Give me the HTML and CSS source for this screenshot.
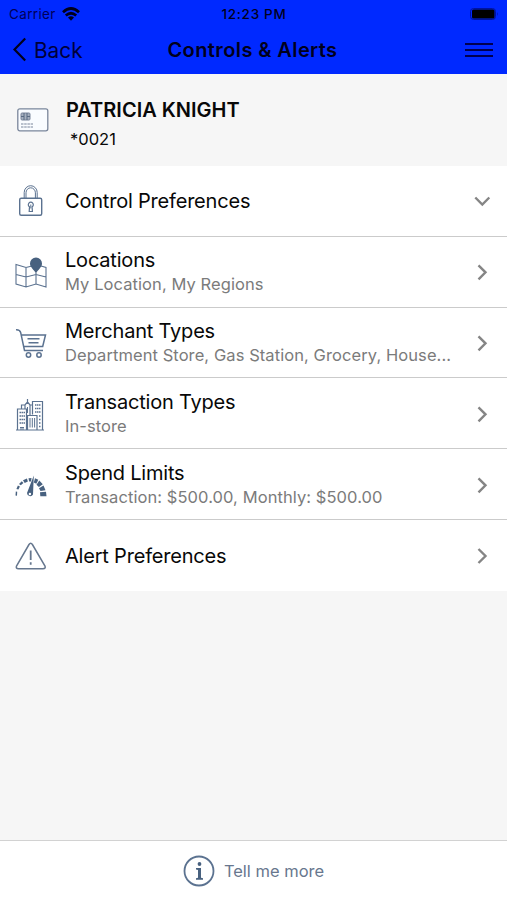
FILE: index.html
```html
<!DOCTYPE html>
<html lang="en">
<head>
<meta charset="utf-8">
<title>Controls &amp; Alerts</title>
<link rel="stylesheet" href="styles.css">
</head>
<body>
<div class="app">
  <header class="top">
    <div class="status">
      <div class="carrier"><span>Carrier</span>
        <svg width="18" height="14" viewBox="0 0 18 14"><g fill="none" stroke="#00001c" stroke-width="2.7"><path d="M1 5.2Q9-2.2 17 5.2"/><path d="M3.800 8.500Q9 4 14.200 8.500"/></g><path d="M6 10.600Q9 8 12 10.600L9 13.800Z" fill="#00001c"/></svg>
      </div>
      <div class="time">12:23 PM</div>
      <div class="power"><svg width="29" height="12" viewBox="0 0 29 12"><rect x=".5" y=".5" width="25" height="11" rx="3" fill="none" stroke="#0013a0"/><rect x="2" y="1.500" width="22.500" height="9" rx="1.500" fill="#000"/><path d="M27 4v4q1.500-2 0-4" fill="#0013a0"/></svg></div>
    </div>
    <nav class="nav">
      <div class="back"><svg width="14" height="26" viewBox="0 0 14 26"><path d="M13.200 1.500 2.500 12.500l10.700 11" fill="none" stroke="#00001c" stroke-width="2.200"/></svg><span>Back</span></div>
      <h1>Controls &amp; Alerts</h1>
      <div class="menu"><i></i><i></i><i></i></div>
    </nav>
  </header>
  <section class="account">
    <svg width="32" height="24" viewBox="0 0 32 24" fill="none" stroke="#7a869b"><rect x=".8" y=".8" width="30" height="22" rx="2" fill="#f9fcff" stroke-width="1.300"/><rect x="4" y="5" width="9" height="7" rx="1" fill="#a5afbe"/><path d="M4 8.500h3M10 8.500h3M7 5v7M10 5v7" stroke="#596a82"/><path d="M4 16h12M4 19h12" stroke-dasharray="2.500 .7" stroke-width="1.200"/></svg>
    <div><h2>PATRICIA KNIGHT</h2><p>*0021</p></div>
  </section>
  <main class="list">
    <div class="row">
      <div class="icon"><svg width="32" height="34" viewBox="0 0 32 34" fill="none" stroke="#5b7290" stroke-width="1.400"><rect x="4.700" y="14.200" width="22" height="17" rx="1.500"/><path d="M9.200 14V8.500a6.500 6.800 0 0 1 13 0V14M11 14V8.800a4.700 5 0 0 1 9.400 0V14" stroke-width="1"/><path d="M14.500 22.800a2.500 2.500 0 1 1 2.600 0l.3 4.700h-3.200z" stroke-width="1.200"/><path d="M15.800 20.500v4" stroke-width="1"/></svg></div>
      <div class="text"><h3>Control Preferences</h3></div>
      <svg class="arrow" width="18" height="18" viewBox="0 0 18 18"><path d="m2.300 5.500 7 7 7-7"/></svg>
    </div>
    <div class="row">
      <div class="icon"><svg width="32" height="34" viewBox="0 0 32 34" fill="none" stroke="#5b7290" stroke-width="1.100"><path d="M16 11.200 11 12.500 1 9.500V29l10 3 10-3 10 3V12.500l-5-1.500M11 12.500V32M21 18v11M1 19.500l10 2.500 10-2.500 10 2.500"/><path d="M21 18.500c-2-4-6-6-6-10a6 6 0 0 1 12 0c0 4-4 6-6 10z" fill="#48617f" stroke="none"/></svg></div>
      <div class="text"><h3>Locations</h3><p>My Location, My Regions</p></div>
      <svg class="arrow" width="18" height="18" viewBox="0 0 18 18"><path d="m5.500 2.300 7 7-7 7"/></svg>
    </div>
    <div class="row">
      <div class="icon"><svg width="32" height="34" viewBox="0 0 32 34" fill="none" stroke="#5b7290" stroke-width="1.500"><path d="M1 3.700q4-.2 4.700 3L9.500 24.500H28M6.500 9h24L27.700 20.500H9"/><path d="M12.500 12.700h12M13.500 16.700h10"/><circle cx="13.500" cy="29" r="2.200"/><circle cx="24" cy="29" r="2.200"/></svg></div>
      <div class="text"><h3>Merchant Types</h3><p>Department Store, Gas Station, Grocery, House...</p></div>
      <svg class="arrow" width="18" height="18" viewBox="0 0 18 18"><path d="m5.500 2.300 7 7-7 7"/></svg>
    </div>
    <div class="row">
      <div class="icon"><svg width="32" height="34" viewBox="0 0 32 34" fill="none" stroke="#5b7290"><path d="M1 33h28M2.500 33V12h9v21M17.500 17.500V4.500h10V33M12.500 18.500h9.500V33h-9.500zM6.500 12V8h3.500l2.500-3 2.500 3h2.500M12.500 5V2M10 8v4M15 8v10" stroke-width="1.200"/><path d="M4.500 15.500h5.500M4.500 19h5.500M4.500 22.500h5.500M4.500 26h5.500M20 8h5.500M20 11.500h5.500M20 15h5.500M24 19h2M24 22.500h2M24 26h2M24 29.500h2" stroke-dasharray="1.500 .5" stroke-width="1.300"/><path d="M15 21v9.500M17.300 21v9.500M19.600 21v9.500M12.500 10v6M5 30.500h4M5 32h4"/></svg></div>
      <div class="text"><h3>Transaction Types</h3><p>In-store</p></div>
      <svg class="arrow" width="18" height="18" viewBox="0 0 18 18"><path d="m5.500 2.300 7 7-7 7"/></svg>
    </div>
    <div class="row">
      <div class="icon"><svg width="32" height="34" viewBox="0 0 32 34" fill="#48617f"><path d="m.5 27.500.3-4 1.400.3-.2 4zM1.400 21l1.500-3.600 2 1-1.500 3.200zM4 16l2.800-2.800 1.600 1.800L5.800 17.300zM8 12.200l3.900-1.600 1 2.900-3.200 1.500zM13.500 10.300l3-.3-.4 3.400-2 .2zM20 10.200l3.300 1.500-2 4-2.500-1.300zM24.300 12.500l3.500 3.700-3.900 2.800-2.400-2.200zM28.500 17.500l2 4.700-5 .8-1.500-2.800zM25 24.200l6-.5.500 4.500h-6.200z"/><path d="M18.800 7.500 18 26.500a3.200 3.200 0 0 1-6-1.400z"/><circle cx="14.900" cy="26" r="1.200" fill="#fff"/></svg></div>
      <div class="text"><h3>Spend Limits</h3><p>Transaction: $500.00, Monthly: $500.00</p></div>
      <svg class="arrow" width="18" height="18" viewBox="0 0 18 18"><path d="m5.500 2.300 7 7-7 7"/></svg>
    </div>
    <div class="row">
      <div class="icon"><svg width="32" height="34" viewBox="0 0 32 34" fill="none" stroke="#66778e" stroke-width="1.500"><path d="M14 5.500q1.700-2.500 3.400 0L30 27q1 2.700-2 2.700H3.500q-3 0-2-2.700z"/><path d="M15.700 11.500v9.500M15.700 23.300v2.400" stroke-width="1.800"/></svg></div>
      <div class="text"><h3>Alert Preferences</h3></div>
      <svg class="arrow" width="18" height="18" viewBox="0 0 18 18"><path d="m5.500 2 7 7-7 7"/></svg>
    </div>
  </main>
  <footer class="more">
    <svg width="32" height="32" viewBox="0 0 32 32"><circle cx="16" cy="16" r="14.500" fill="none" stroke="#5b7290" stroke-width="1.800"/><circle cx="16.500" cy="9" r="1.900" fill="#48617f"/><path d="M13 13h5v9.800l2 .5v1.500h-7v-1.500l2-.5v-7.800l-2-.5z" fill="#48617f"/></svg>
    <span>Tell me more</span>
  </footer>
</div>
</body>
</html>
```
FILE: styles.css
```css
* { box-sizing: border-box; }
body { margin: 0; background: #f6f6f6; font-family: Inter, "Liberation Sans", sans-serif; color: #080808; }
h1, h2, h3, p { margin: 0; }
svg { display: block; flex: none; }
.app { width: 507px; height: 900px; display: flex; flex-direction: column; overflow: hidden; }
.top { height: 74px; flex: none; background: #0029ff; color: #00001c; }
.status { height: 27px; padding: 0 8px 0 9px; display: grid; grid-template-columns: 1fr auto 1fr; align-items: center; font-size: 13.5px; }
.carrier { display: flex; gap: 6px; align-items: center; letter-spacing: .35px; color: #000058; }
.time { font-weight: 500; letter-spacing: .7px; }
.power { justify-self: end; }
.nav { height: 46px; padding: 0 14px 0 12px; display: grid; grid-template-columns: 1fr auto 1fr; align-items: center; }
.back { display: flex; align-items: center; gap: 8px; font-size: 20.8px; color: #000038; }
.nav h1 { font-size: 20px; font-weight: 600; line-height: 26px; letter-spacing: .4px; }
.menu { justify-self: end; width: 28px; display: grid; gap: 4px; }
.menu i { height: 2px; background: #000050; }
.account { height: 92px; flex: none; display: flex; padding: 17px 17px 0; gap: 17px; background: #f6f6f6; }
.account svg { margin-top: 17px; }
.account h2 { margin-top: 6px; font-size: 20px; line-height: 26px; font-weight: 600; }
.account p { margin: 5px 0 0 4px; font-size: 16.5px; line-height: 22px; }
.list { flex: none; background: #fff; }
.row { height: 70.8px; display: flex; align-items: center; padding: 1px 16px 0 15px; border-bottom: 1px solid #cbcbcb; }
.row:last-child { border-bottom: 0; }
.icon { width: 50px; flex: none; }
.text { flex: 1; white-space: nowrap; }
h3 { font-size: 20px; line-height: 26px; font-weight: 400; letter-spacing: -.2px; }
.text p { font-size: 16.5px; line-height: 20px; color: #7b7b7b; margin: 1px 0 3px; letter-spacing: .08px; }
.arrow { fill: none; stroke: #858585; stroke-width: 2.4; }
.more { margin-top: auto; height: 60px; border-top: 1px solid #d2d2d2; background: #fff; display: flex; align-items: center; justify-content: center; gap: 9px; color: #68778e; font-size: 16.5px; }
```
